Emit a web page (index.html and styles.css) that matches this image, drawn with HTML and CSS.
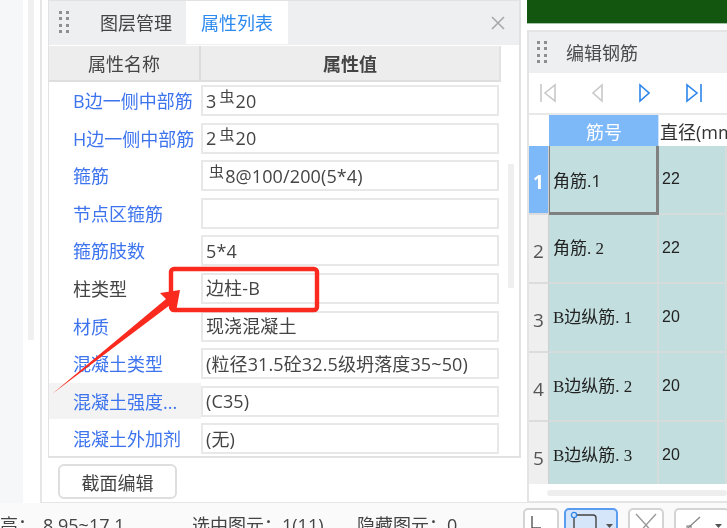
FILE: index.html
```html
<!DOCTYPE html>
<html lang="zh-CN">
<head>
<meta charset="utf-8">
<title>属性列表</title>
<link rel="stylesheet" href="styles.css">
</head>
<body>
<div class="app">
  <div class="workspace">
    <div class="strip"></div>
    <div class="sidegap"><div class="sidebar-thumb"></div></div>
    <div class="propwrap">
      <section class="panel">
        <header class="tabs">
          <svg class="grip" width="10" height="22" viewBox="0 0 10 22"><g fill="#8f8f8f"><rect x="0" y="0" width="3" height="3"/><rect x="7" y="0" width="3" height="3"/><rect x="0" y="6" width="3" height="3"/><rect x="7" y="6" width="3" height="3"/><rect x="0" y="13" width="3" height="3"/><rect x="7" y="13" width="3" height="3"/><rect x="0" y="19" width="3" height="3"/><rect x="7" y="19" width="3" height="3"/></g></svg>
          <span class="tab">图层管理</span>
          <span class="tab active">属性列表</span>
          <svg class="close" width="14" height="14" viewBox="0 0 14 14"><path d="M1 1L13 13M13 1L1 13" stroke="#a9a9a9" stroke-width="1.6" fill="none"/></svg>
        </header>
        <div class="body">
          <div class="content">
            <div class="colhead">
              <div class="colname">属性名称</div>
              <div class="colvalue">属性值</div>
            </div>
            <div class="rows">
              <div class="row"><div class="label">B边一侧中部筋</div><div class="input">3<span class="bar">虫</span>20</div></div>
              <div class="row"><div class="label">H边一侧中部筋</div><div class="input">2<span class="bar">虫</span>20</div></div>
              <div class="row"><div class="label">箍筋</div><div class="input"><span class="bar">虫</span>8@100/200(5*4)</div></div>
              <div class="row"><div class="label">节点区箍筋</div><div class="input"></div></div>
              <div class="row"><div class="label">箍筋肢数</div><div class="input">5*4</div></div>
              <div class="row"><div class="label plain">柱类型</div><div class="input">边柱-B</div></div>
              <div class="row"><div class="label">材质</div><div class="input">现浇混凝土</div></div>
              <div class="row"><div class="label">混凝土类型</div><div class="input">(粒径31.5砼32.5级坍落度35~50)</div></div>
              <div class="row"><div class="label hl">混凝土强度...</div><div class="input">(C35)</div></div>
              <div class="row"><div class="label">混凝土外加剂</div><div class="input">(无)</div></div>
            </div>
          </div>
          <div class="vscroll"><div class="vthumb"></div></div>
        </div>
      </section>
      <button class="edit">截面编辑</button>
    </div>
    <div class="right">
      <div class="greenbar"></div>
      <section class="rebar">
        <header class="rebar-head">
          <svg class="grip" width="10" height="22" viewBox="0 0 10 22"><g fill="#8f8f8f"><rect x="0" y="0" width="3" height="3"/><rect x="7" y="0" width="3" height="3"/><rect x="0" y="6" width="3" height="3"/><rect x="7" y="6" width="3" height="3"/><rect x="0" y="13" width="3" height="3"/><rect x="7" y="13" width="3" height="3"/><rect x="0" y="19" width="3" height="3"/><rect x="7" y="19" width="3" height="3"/></g></svg>
          <span class="rebar-title">编辑钢筋</span>
        </header>
        <nav class="pager">
          <svg class="nav first" width="16" height="20" viewBox="0 0 16 20"><path d="M1 1V19M15 2V18L5 10Z" fill="none" stroke="#c9c9c9" stroke-width="1.6"/></svg>
          <svg class="nav prev" width="11" height="20" viewBox="0 0 11 20"><path d="M10 2V18L1 10Z" fill="none" stroke="#c9c9c9" stroke-width="1.6"/></svg>
          <svg class="nav next" width="11" height="20" viewBox="0 0 11 20"><path d="M1 2V18L10 10Z" fill="none" stroke="#2f86ea" stroke-width="1.6"/></svg>
          <svg class="nav last" width="16" height="20" viewBox="0 0 16 20"><path d="M15 1V19M1 2V18L11 10Z" fill="none" stroke="#2f86ea" stroke-width="1.6"/></svg>
        </nav>
        <div class="grid">
          <div class="corner"></div><div class="gh sel">筋号</div><div class="gh">直径(mm)</div>
          <div class="num on">1</div><div class="cell name cur sans">角筋.1</div><div class="cell">22</div>
          <div class="num">2</div><div class="cell name">角筋. 2</div><div class="cell">22</div>
          <div class="num">3</div><div class="cell name">B边纵筋. 1</div><div class="cell">20</div>
          <div class="num">4</div><div class="cell name">B边纵筋. 2</div><div class="cell">20</div>
          <div class="num">5</div><div class="cell name">B边纵筋. 3</div><div class="cell">20</div>
        </div>
        <div class="hscroll"><div class="hthumb"></div></div>
      </section>
    </div>
  </div>
  <footer class="statusbar">
    <div class="status s1"><span class="clip">高：</span><span class="val">8.95~17.1</span></div>
    <div class="status s2">选中图元：1(11)</div>
    <div class="status s3">隐藏图元：0</div>
    <div class="tools">
      <div class="tool t1"><svg width="34" height="20" viewBox="0 0 34 20"><path d="M7 6V18H16" fill="none" stroke="#555" stroke-width="1.4"/></svg></div>
      <div class="tool t2 active"><svg width="52" height="20" viewBox="0 0 52 20"><path d="M8 5H27Q30 5 30 8V20M8 5V20" fill="none" stroke="#444" stroke-width="1.4"/><circle cx="8" cy="5" r="2.6" fill="#d5e6fb" stroke="#2f86ea" stroke-width="1.3"/><path d="M40 14H47L43.5 18Z" fill="#555"/></svg></div>
      <div class="tool t3"><svg width="34" height="20" viewBox="0 0 34 20"><path d="M6 4L16 15L26 4M16 15L10 22M16 15L22 22" fill="none" stroke="#9a9a9a" stroke-width="1.4"/></svg></div>
      <div class="tool t4"><svg width="52" height="20" viewBox="0 0 52 20"><path d="M24 7L12 18" fill="none" stroke="#888" stroke-width="1.3"/><rect x="11" y="16" width="4" height="4" fill="none" stroke="#777"/><path d="M39 14H46L42.5 18Z" fill="#555"/></svg></div>
    </div>
  </footer>
  <svg class="annotation" width="727" height="528" viewBox="0 0 727 528">
    <rect x="171" y="269" width="146" height="41" rx="3" fill="none" stroke="#fb2a1f" stroke-width="4.4"/>
    <path d="M52 394L166 299L160 293L180 290L176 312L170 305Z" fill="#fb2a1f"/>
  </svg>
</div>
</body>
</html>
```
FILE: styles.css
```css
* { box-sizing: border-box; }
html, body { margin: 0; padding: 0; background: #fff; }
body { width: 727px; height: 528px; overflow: hidden; }
.app {
  position: relative;
  width: 727px;
  height: 528px;
  overflow: hidden;
  display: flex;
  flex-direction: column;
  font-family: "Open Sans", "Noto Sans CJK SC", sans-serif;
  font-size: 18px;
  color: #444;
  filter: blur(0.35px);
}
.workspace { display: flex; height: 503px; flex: none; }
.strip { width: 23px; background: #f6f7f9; flex: none; }
.sidegap { width: 17px; flex: none; padding: 0 6px 0 5px; }
.sidebar-thumb { height: 340px; background: #f0f0f0; }
.propwrap {
  width: 487px;
  flex: none;
  border-left: 2px solid #e6e6e6;
  border-bottom: 1px solid #e6e6e6;
  padding-left: 6px;
}
.panel {
  width: 473px;
  height: 458px;
  border: 1px solid #e2e2e2;
  border-width: 1px 2px 2px 1px;
  display: flex;
  flex-direction: column;
}
.tabs {
  height: 44px;
  flex: none;
  background: #eeeff1;
  display: flex;
  align-items: stretch;
  position: relative;
}
.tabs .grip { margin: 10px 0 0 10px; flex: none; }
.tab { width: 102px; display: flex; align-items: center; justify-content: center; margin-bottom: 1px; line-height: 1; }
.tabs .tab:nth-of-type(1) { margin-left: 15px; width: 102px; justify-content: flex-start; padding-left: 16px; }
.tab.active { background: #fff; color: #2c8af0; width: 102px; }
.close { margin: 15px 14px 0 auto; flex: none; }
.body { display: flex; flex: 1; min-height: 0; }
.content { width: 452px; flex: none; padding-top: 1px; }
.colhead { height: 36px; background: #ededed; border-bottom: 2px solid #dedede; border-right: 2px solid #e2e2e2; display: flex; }
.colname { width: 152px; border-right: 2px solid #dcdcdc; display: flex; align-items: center; justify-content: center; }
.colvalue { flex: 1; display: flex; align-items: center; justify-content: center; font-weight: 700; }
.rows { display: flex; flex-direction: column; }
.row { height: 37.6px; flex: none; display: flex; align-items: flex-start; }
.label { width: 152px; height: 36px; flex: none; padding-left: 24px; display: flex; align-items: center; color: #3d74ee; white-space: nowrap; }
.label.plain { color: #444; }
.label.hl { background: #f3f3f3; }
.input { width: 298px; height: 31px; margin-top: 3px; border: 2px solid #e8e8e8; padding-left: 3px; display: flex; align-items: center; white-space: nowrap; line-height: 1; letter-spacing: 0.12px; }
.bar { font-size: 15px; position: relative; top: -4px; margin: 0 1px 0 3px; }
.vscroll { width: 19px; flex: none; padding: 119px 6px 0 7px; }
.vthumb { height: 124px; background: #efefef; }
.edit {
  display: block;
  margin: 6px 0 0 10px;
  width: 119px;
  height: 35px;
  border: 2px solid #dedede;
  border-radius: 6px;
  background: #fff;
  font: inherit;
  color: #444;
  padding: 0;
}
.right { flex: 1; min-width: 0; display: flex; flex-direction: column; }
.greenbar { height: 24px; flex: none; background: #12560f; border-bottom: 1px solid #a8c4a8; }
.rebar { margin-top: 6px; flex: 1; min-height: 0; border: 2px solid #e4e4e4; border-right: 0; display: flex; flex-direction: column; }
.rebar-head { height: 41px; flex: none; background: #eeeff1; display: flex; align-items: center; padding: 0 0 1px 8px; }
.rebar-head .grip { margin-right: 19px; }
.rebar-title { color: #4b4b4b; }
.pager { height: 42px; flex: none; display: flex; align-items: center; border-bottom: 2px solid #e8e8e8; padding-left: 11px; }
.nav.prev { margin-left: 36px; }
.nav.next { margin-left: 36px; }
.nav.last { margin-left: 36px; }
.grid {
  display: grid;
  grid-template-columns: 20px 110px 1fr;
  grid-template-rows: 31px repeat(5, 69px);
  height: 369px;
  flex: none;
  overflow: hidden;
}
.corner { background: #fff; }
.gh { display: flex; align-items: center; padding-left: 1px; white-space: nowrap; color: #333; background: #fff; overflow: hidden; }
.gh.sel { background: #7db8f8; color: #fff; justify-content: center; border-right: 1px solid #cfe3f8; }
.num { background: #efefef; border-bottom: 2px solid #dcdcdc; border-right: 1px solid #d0d0d0; display: flex; align-items: center; justify-content: center; padding-top: 4px; font-size: 19px; color: #555; }
.num.on { background: #7db8f8; color: #fff; font-weight: 700; }
.cell { background: #c2dede; border-bottom: 2px solid #d6dcdc; border-right: 2px solid #d6dcdc; display: flex; align-items: center; padding: 0 0 2px 3px; font-family: "Liberation Sans", "Noto Sans CJK SC", sans-serif; font-size: 16px; color: #222; white-space: pre; }
.cell.name { font-family: "Liberation Serif", "Noto Sans CJK SC", serif; font-size: 17px; padding: 0 0 5px 4px; }
.cell.sans { font-family: "Open Sans", "Noto Sans CJK SC", sans-serif; }
.cell.cur { border: solid #808080; border-width: 0 3px 3px 1px; padding-left: 3px; padding-bottom: 0; }
.hscroll { flex: 1; background: #fff; padding: 6px 0 0 18px; }
.hthumb { height: 6px; background: #eeeeee; border-radius: 3px; }
.statusbar { height: 25px; flex: none; background: #fafafa; display: flex; align-items: flex-start; white-space: nowrap; position: relative; }
.status { flex: none; line-height: 18px; padding-top: 13px; color: #444; }
.s1 { width: 192px; display: flex; }
.s1 .val { margin-left: 7px; }
.s2 { width: 165px; }
.s3 { width: 166px; }
.tools { display: flex; flex: none; padding-top: 5px; }
.tool { height: 30px; border: 2px solid #d4d4d4; border-radius: 5px; background: #fff; flex: none; overflow: hidden; }
.t1 { width: 36px; }
.t2 { width: 54px; margin-left: 5px; }
.t2.active { background: #d5e6fb; border-color: #5a9cf0; }
.t3 { width: 36px; margin-left: 10px; }
.t4 { width: 56px; margin-left: 10px; }
.annotation { position: absolute; left: 0; top: 0; pointer-events: none; }
```
